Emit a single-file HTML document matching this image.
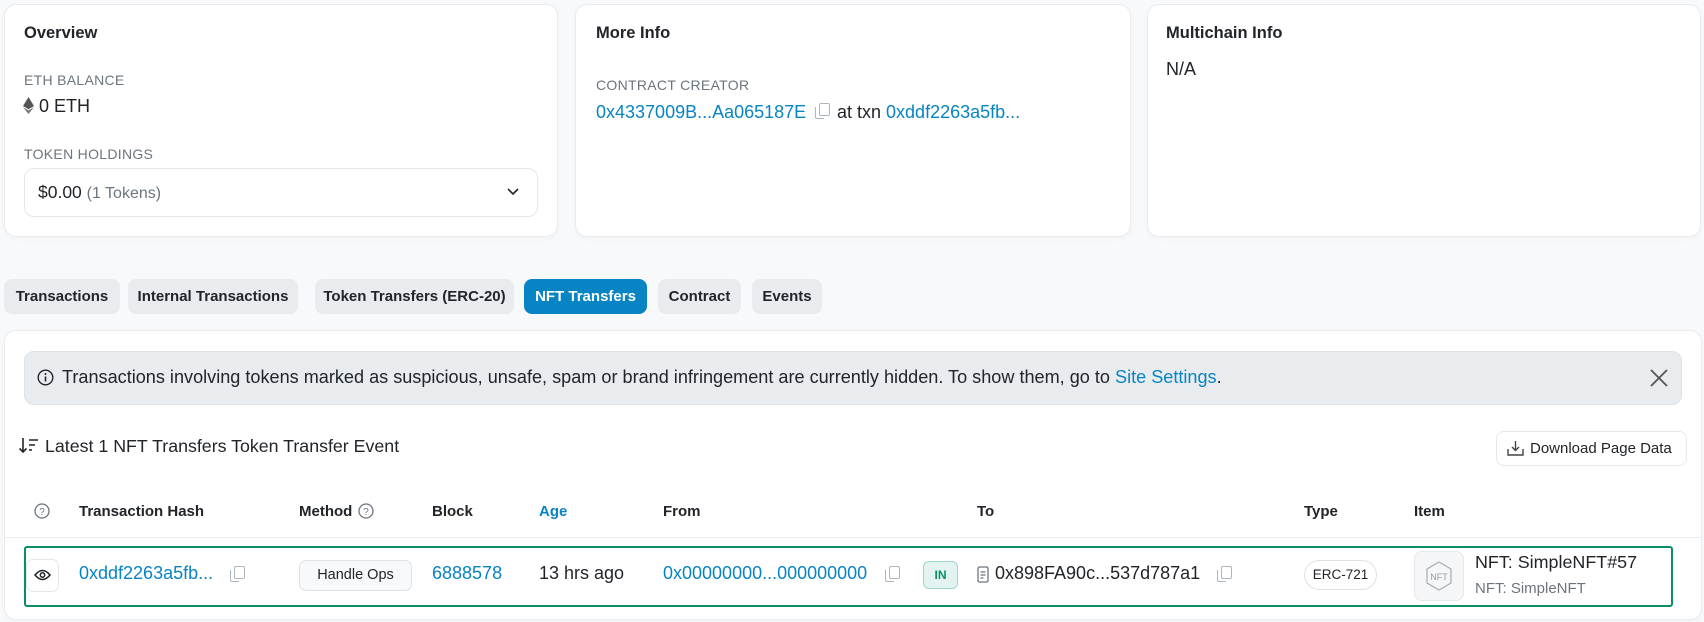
<!DOCTYPE html>
<html><head><meta charset="utf-8"><style>
*{box-sizing:border-box;margin:0;padding:0}
body{width:1704px;height:622px;background:#f8f9fb;font-family:"Liberation Sans",sans-serif;color:#212529;position:relative;overflow:hidden;font-size:15px}
.a{position:absolute;white-space:nowrap}
.card{position:absolute;background:#fff;border:1px solid #e9ecef;border-radius:12px;box-shadow:0 2px 6px rgba(0,0,0,.03)}
.t{font-size:16.5px;font-weight:bold;color:#212529}
.lbl{font-size:14px;color:#6c757d;letter-spacing:.3px}
.lnk{color:#0784c3}
.tab{position:absolute;top:279px;height:35px;line-height:35px;border-radius:8px;background:#e9ecef;font-size:15px;font-weight:bold;color:#212529;text-align:center}
.th{position:absolute;top:503px;font-size:15px;font-weight:bold;color:#212529}
.r{position:absolute;top:563px;font-size:18px}
.cp{position:absolute;width:11px;height:13px;border:1.6px solid #adb5bd;border-radius:2px}
.cp:before{content:"";position:absolute;left:-5px;top:3px;width:8px;height:11px;border-left:1.6px solid #adb5bd;border-bottom:1.6px solid #adb5bd;border-radius:0 0 0 2px}
</style></head><body>

<div class="card" style="left:4px;top:4px;width:554px;height:233px"></div>
<div class="a t" style="left:24px;top:24px">Overview</div>
<div class="a lbl" style="left:24px;top:72px">ETH BALANCE</div>
<svg class="a" style="left:23px;top:97px" width="11" height="17" viewBox="0 0 11 17"><path d="M5.5 0L0 9l5.5 3.3L11 9z" fill="#555"/><path d="M5.5 13.4L0 10.1l5.5 6.9 5.5-6.9z" fill="#777"/></svg>
<div class="a" style="left:39px;top:96px;font-size:18px">0 ETH</div>
<div class="a lbl" style="left:24px;top:146px">TOKEN HOLDINGS</div>
<div class="a" style="left:24px;top:168px;width:514px;height:49px;border:1px solid #e5e7eb;border-radius:10px"></div>
<div class="a" style="left:38px;top:182px;font-size:17.5px">$0.00 <span style="color:#6c757d;font-size:16px">(1 Tokens)</span></div>
<svg class="a" style="left:507px;top:188px" width="12" height="8" viewBox="0 0 12 8"><path d="M1 1l5 5 5-5" stroke="#212529" stroke-width="1.6" fill="none"/></svg>

<div class="card" style="left:575px;top:4px;width:556px;height:233px"></div>
<div class="a t" style="left:596px;top:24px">More Info</div>
<div class="a lbl" style="left:596px;top:77px">CONTRACT CREATOR</div>
<div class="a lnk" style="left:596px;top:102px;font-size:18px">0x4337009B...Aa065187E</div>
<div class="cp" style="left:819px;top:103px"></div>
<div class="a" style="left:837px;top:102px;font-size:18px">at txn <span class="lnk">0xddf2263a5fb...</span></div>

<div class="card" style="left:1147px;top:4px;width:554px;height:233px"></div>
<div class="a t" style="left:1166px;top:24px">Multichain Info</div>
<div class="a" style="left:1166px;top:59px;font-size:18px">N/A</div>

<div class="tab" style="left:4px;width:116px">Transactions</div>
<div class="tab" style="left:128px;width:170px">Internal Transactions</div>
<div class="tab" style="left:315px;width:199px">Token Transfers (ERC-20)</div>
<div class="tab" style="left:524px;width:123px;background:#0784c3;color:#fff">NFT Transfers</div>
<div class="tab" style="left:658px;width:83px">Contract</div>
<div class="tab" style="left:752px;width:70px">Events</div>

<div class="card" style="left:4px;top:330px;width:1698px;height:290px"></div>
<div class="a" style="left:24px;top:351px;width:1658px;height:54px;background:#e9ecef;border:1px solid #dee2e6;border-radius:10px"></div>
<svg class="a" style="left:37px;top:369px" width="17" height="17" viewBox="0 0 17 17"><circle cx="8.5" cy="8.5" r="7.3" stroke="#212529" stroke-width="1.4" fill="none"/><path d="M8.5 7.5v5" stroke="#212529" stroke-width="1.6"/><circle cx="8.5" cy="5" r="1" fill="#212529"/></svg>
<div class="a" style="left:62px;top:367px;font-size:18.1px">Transactions involving tokens marked as suspicious, unsafe, spam or brand infringement are currently hidden. To show them, go to <span class="lnk">Site Settings</span>.</div>
<svg class="a" style="left:1650px;top:369px" width="18" height="18" viewBox="0 0 18 18"><path d="M1 1l16 16M17 1L1 17" stroke="#555" stroke-width="1.8"/></svg>

<svg class="a" style="left:19px;top:437px" width="20" height="17" viewBox="0 0 20 17"><path d="M4 1v14M0.5 11.5L4 15l3.5-3.5" stroke="#212529" stroke-width="1.6" fill="none"/><path d="M10 3h9M10 8h6M10 13h3" stroke="#212529" stroke-width="1.6"/></svg>
<div class="a" style="left:45px;top:436px;font-size:17.8px">Latest 1 NFT Transfers Token Transfer Event</div>
<div class="a" style="left:1496px;top:431px;width:191px;height:35px;border:1px solid #e5e7eb;border-radius:8px;background:#fff"></div>
<svg class="a" style="left:1507px;top:440px" width="17" height="17" viewBox="0 0 17 17"><path d="M8.5 1v9M5 7l3.5 3.5L12 7" stroke="#444" stroke-width="1.4" fill="none"/><path d="M1 9v6h15V9" stroke="#444" stroke-width="1.4" fill="none"/></svg>
<div class="a" style="left:1530px;top:440px;font-size:15px">Download Page Data</div>

<svg class="a" style="left:34px;top:503px" width="16" height="16" viewBox="0 0 16 16"><circle cx="8" cy="8" r="7" stroke="#6c757d" stroke-width="1.3" fill="none"/><text x="8" y="12" font-size="10" text-anchor="middle" fill="#6c757d" font-family="Liberation Sans">?</text></svg>
<div class="th" style="left:79px">Transaction Hash</div>
<div class="th" style="left:299px">Method</div>
<svg class="a" style="left:358px;top:503px" width="16" height="16" viewBox="0 0 16 16"><circle cx="8" cy="8" r="7" stroke="#6c757d" stroke-width="1.3" fill="none"/><text x="8" y="12" font-size="10" text-anchor="middle" fill="#6c757d" font-family="Liberation Sans">?</text></svg>
<div class="th" style="left:432px">Block</div>
<div class="th" style="left:539px;color:#0784c3">Age</div>
<div class="th" style="left:663px">From</div>
<div class="th" style="left:977px">To</div>
<div class="th" style="left:1304px">Type</div>
<div class="th" style="left:1414px">Item</div>
<div class="a" style="left:5px;top:537px;width:1696px;height:1px;background:#e9ecef"></div>

<div class="a" style="left:24px;top:546px;width:1649px;height:61px;border:2px solid #0a8f63;border-radius:3px"></div>
<div class="a" style="left:26px;top:559px;width:33px;height:33px;border:1px solid #e5e7eb;border-radius:7px;background:#fff"></div>
<svg class="a" style="left:34px;top:569px" width="17" height="12" viewBox="0 0 17 12"><path d="M1 6Q8.5-3 16 6Q8.5 15 1 6z" stroke="#212529" stroke-width="1.5" fill="none"/><circle cx="8.5" cy="6" r="2.2" stroke="#212529" stroke-width="1.5" fill="none"/></svg>
<div class="r lnk" style="left:79px">0xddf2263a5fb...</div>
<div class="cp" style="left:234px;top:566px"></div>
<div class="a" style="left:299px;top:560px;width:113px;height:31px;border:1px solid #dee2e6;border-radius:7px;background:#f8f9fa;text-align:center;line-height:29px;font-size:14.5px">Handle Ops</div>
<div class="r lnk" style="left:432px">6888578</div>
<div class="r" style="left:539px">13 hrs ago</div>
<div class="r lnk" style="left:663px">0x00000000...000000000</div>
<div class="cp" style="left:889px;top:566px"></div>
<div class="a" style="left:923px;top:561px;width:35px;height:28px;border:1px solid #9fd6cc;border-radius:6px;background:#e3f3f1;color:#0a8f63;font-size:12px;font-weight:bold;text-align:center;line-height:26px">IN</div>
<svg class="a" style="left:977px;top:566px" width="12" height="17" viewBox="0 0 12 17"><rect x="1" y="1" width="10" height="15" rx="1.5" stroke="#6c757d" stroke-width="1.3" fill="none"/><path d="M3.5 6h5M3.5 9h5M3.5 12h3" stroke="#6c757d" stroke-width="1.2"/></svg>
<div class="r" style="left:995px">0x898FA90c...537d787a1</div>
<div class="cp" style="left:1221px;top:566px"></div>
<div class="a" style="left:1304px;top:560px;width:73px;height:30px;border:1px solid #dee2e6;border-radius:15px;text-align:center;line-height:28px;font-size:13.5px">ERC-721</div>
<div class="a" style="left:1414px;top:551px;width:50px;height:50px;border:1px solid #e5e7eb;border-radius:8px;background:#f5f6f8"></div>
<svg class="a" style="left:1425px;top:561px" width="28" height="30" viewBox="0 0 28 30"><path d="M14 1L26 8v14L14 29 2 22V8z" stroke="#aab" stroke-width="1.2" fill="none"/><text x="14" y="19" font-size="9" text-anchor="middle" fill="#99a" font-family="Liberation Sans">NFT</text></svg>
<div class="a" style="left:1475px;top:552px;font-size:17.9px">NFT: SimpleNFT#57</div>
<div class="a" style="left:1475px;top:580px;font-size:15px;color:#6c757d">NFT: SimpleNFT</div>
</body></html>
